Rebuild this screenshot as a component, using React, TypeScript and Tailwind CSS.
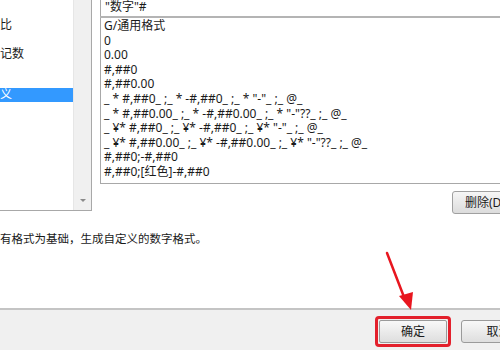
const formats = [
  "G/通用格式",
  "0",
  "0.00",
  "#,##0",
  "#,##0.00",
  '_ * #,##0_ ;_ * -#,##0_ ;_ * "-"_ ;_ @_',
  '_ * #,##0.00_ ;_ * -#,##0.00_ ;_ * "-"??_ ;_ @_',
  '_ ¥* #,##0_ ;_ ¥* -#,##0_ ;_ ¥* "-"_ ;_ @_',
  '_ ¥* #,##0.00_ ;_ ¥* -#,##0.00_ ;_ ¥* "-"??_ ;_ @_',
  "#,##0;-#,##0",
  "#,##0;[红色]-#,##0",
];

const font = "font-['Noto_Sans','Noto_Sans_CJK_SC',sans-serif]";

export default function App() {
  return (
    <div className={`relative w-[500px] h-[350px] overflow-hidden bg-white text-[12px] text-[#1a1a1a] ${font}`}>
      <div className="flex h-[308px] flex-col">
        <div className="flex">
          {/* category list */}
          <div className="flex h-[211px] w-[92px] border-r border-b border-[#a8a8a8]">
            <div className="flex flex-1 flex-col">
              <div className="h-[16px]" />
              <div className="h-[17px] leading-[17px]">比</div>
              <div className="h-[12px]" />
              <div className="h-[17px] leading-[17px]">记数</div>
              <div className="h-[26px]" />
              <div className="h-[14px] bg-[#3399ff] leading-[14px] text-white">义</div>
            </div>
            <div className="flex w-[18px] flex-col justify-end border-l border-[#e6e6e6] bg-[#f0f0f0] pb-[8px]">
              <div className="mx-auto h-0 w-0 border-x-[3px] border-t-[3px] border-x-transparent border-t-[#8a8a8a]" />
            </div>
          </div>

          {/* type box + format list */}
          <div className="ml-[8px] flex flex-1 flex-col">
            <div className="h-[16px] border-l border-[#a8a8a8] pl-[4px] leading-[13px]">"数字"#</div>
            <div className="h-[2px] bg-[#b4b4b4]" />
            <div className="h-[166px] border-l border-b border-[#a8a8a8] pl-[3px] pt-[1px]">
              {formats.map((f) => (
                <div key={f} className="h-[14.6px] whitespace-nowrap leading-[14.6px]">
                  {f}
                </div>
              ))}
            </div>
            <div className="mt-[7px] flex justify-end">
              <button className="-mr-[8px] h-[23px] w-[56px] rounded-[3px] border border-[#a0a0a0] bg-gradient-to-b from-[#f6f6f6] to-[#dcdcdc] pl-[12px] text-left text-[12px]">
                删除(D)
              </button>
            </div>
          </div>
        </div>
        <div className="mt-[16px] whitespace-nowrap text-[11.5px]">有格式为基础，生成自定义的数字格式。</div>
      </div>

      {/* bottom bar */}
      <div className="h-[2px] bg-[#c4c4c4]" />
      <div className="flex h-[40px] items-start justify-end gap-[10px] bg-[#f0f0f0] pt-[6px]">
        <div className="rounded-[4px] border-[3px] border-[#e3202c] p-[1px]">
          <button className="h-[23px] w-[68px] rounded-[2px] border border-[#9a9a9a] bg-gradient-to-b from-[#f8f8f8] to-[#dedede] text-[12px]">
            确定
          </button>
        </div>
        <div className="pt-[4px]">
          <button className="-mr-[36px] h-[23px] w-[75px] rounded-[3px] border border-[#9a9a9a] bg-gradient-to-b from-[#f8f8f8] to-[#dedede] text-[12px]">
            取消
          </button>
        </div>
      </div>

      {/* red arrow annotation */}
      <svg className="absolute left-0 top-0" width="500" height="350" viewBox="0 0 500 350">
        <path d="M387 253 L404 297" stroke="#e8161f" strokeWidth="2.5" strokeLinecap="round" />
        <polygon points="399,296 413,292 411,310" fill="#e8161f" />
      </svg>
    </div>
  );
}
